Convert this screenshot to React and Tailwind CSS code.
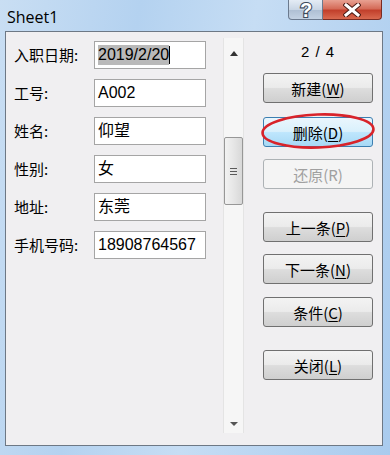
import React from 'react'

const cjk = "font-['Noto_Sans_CJK_SC','Liberation_Sans',sans-serif]"

const fields = [
  { label: '入职日期:', value: '2019/2/20', selected: true },
  { label: '工号:', value: 'A002' },
  { label: '姓名:', value: '仰望' },
  { label: '性别:', value: '女' },
  { label: '地址:', value: '东莞' },
  { label: '手机号码:', value: '18908764567' },
]

function Btn({ text, hot, kind = 'normal', className = '' }) {
  const styles = {
    normal: 'border-[#707070] bg-[linear-gradient(#f3f3f3_0%,#ebebeb_48%,#dddddd_52%,#cfcfcf_100%)] text-black',
    focus: 'border-[#3c7fb1] bg-[linear-gradient(#eaf6fd_0%,#d9f0fc_48%,#bee6fd_52%,#a7d9f5_100%)] text-black',
    disabled: 'border-[#adb2b5] bg-[#f4f4f4] text-[#a0a0a0]',
  }
  return (
    <div
      className={`relative h-[30px] w-[110px] rounded-[3px] border flex items-center justify-center text-[15px] leading-none ${cjk} ${styles[kind]} ${className}`}
    >
      <span>
        {text}(<span className={kind === 'disabled' ? '' : 'underline underline-offset-2'}>{hot}</span>)
      </span>
    </div>
  )
}

export default function App() {
  return (
    <div className="w-[390px] h-[455px] overflow-hidden bg-[linear-gradient(100deg,#c9def3_0%,#b4d2f0_30%,#c6ddf4_55%,#a9cbee_100%)] flex flex-col">
      {/* title bar */}
      <div className="h-[31px] flex items-start justify-between shrink-0">
        <span className="mt-[5px] ml-[7px] text-[16px] text-black font-['Open_Sans','Liberation_Sans',sans-serif]">
          Sheet1
        </span>
        <div className="flex mr-[8px]">
          <div className="w-[35px] h-[20px] border border-[#6b7a8e] border-t-0 rounded-bl-[4px] bg-[linear-gradient(#e4ecf5_0%,#c9d6e5_50%,#aebfd3_52%,#c3d2e3_100%)] flex items-center justify-center">
            <svg width="18" height="20" viewBox="0 0 18 20">
              <text
                x="9"
                y="17"
                textAnchor="middle"
                fontSize="20"
                fontWeight="bold"
                fontFamily="Liberation Sans, sans-serif"
                fill="#ffffff"
                stroke="#3c4a5c"
                strokeWidth="2.2"
                paintOrder="stroke"
              >
                ?
              </text>
            </svg>
          </div>
          <div className="w-[59px] h-[20px] border border-[#7a2b22] border-t-0 border-l-0 rounded-br-[4px] bg-[linear-gradient(#e8a192_0%,#d56c59_45%,#c2402c_55%,#d9694f_100%)] flex items-center justify-center">
            <svg width="18" height="14" viewBox="0 0 18 14">
              <path d="M3 2 L15 12 M15 2 L3 12" stroke="#4a1a14" strokeWidth="5" strokeLinecap="square" />
              <path d="M3 2 L15 12 M15 2 L3 12" stroke="#ffffff" strokeWidth="3" strokeLinecap="square" />
            </svg>
          </div>
        </div>
      </div>

      {/* client area */}
      <div className="ml-[5px] mr-[7px] h-[415px] border border-[#6d7885] bg-[#f0eff1] flex">
        {/* fields */}
        <div className="w-[217px] pt-[9px] pl-[8px] flex flex-col gap-[10px]">
          {fields.map((f) => (
            <div key={f.label} className="flex items-center h-[28px]">
              <span className={`w-[80px] text-[15px] text-black ${cjk}`}>{f.label}</span>
              <div className="w-[112px] h-[28px] border border-[#a5a5a5] bg-white flex items-center pl-[3px] text-[16px] text-black font-['Liberation_Sans','Noto_Sans_CJK_SC',sans-serif]">
                {f.selected ? (
                  <>
                    <span className="bg-[#b9b9b9] leading-[20px]">{f.value}</span>
                    <span className="w-px h-[18px] bg-black" />
                  </>
                ) : (
                  f.value
                )}
              </div>
            </div>
          ))}
        </div>

        {/* scrollbar */}
        <div className="mt-[6px] w-[21px] h-[395px] border-x border-[#e4e4e4] bg-[#f6f6f6] flex flex-col items-center">
          <div className="h-[30px] flex items-center justify-center">
            <div className="w-0 h-0 border-x-[4px] border-x-transparent border-b-[5px] border-b-[#333]" />
          </div>
          <div className="mt-[69px] w-[19px] h-[68px] rounded-[2px] border border-[#979797] bg-[linear-gradient(90deg,#f2f2f2,#e6e6e6_50%,#d8d8d8)] flex flex-col items-center justify-center gap-[2px]">
            <div className="w-[7px] h-px bg-[#5a5a5a]" />
            <div className="w-[7px] h-px bg-[#5a5a5a]" />
            <div className="w-[7px] h-px bg-[#5a5a5a]" />
          </div>
          <div className="flex-1" />
          <div className="h-[18px] flex items-center justify-center">
            <div className="w-0 h-0 border-x-[4px] border-x-transparent border-t-[4px] border-t-[#555]" />
          </div>
        </div>

        {/* buttons */}
        <div className="ml-[19px] w-[110px] flex flex-col">
          <div className="h-[41px] flex items-center justify-center text-[15px] text-black font-['Liberation_Sans',sans-serif] tracking-[1px]">
            2 / 4
          </div>
          <Btn text="新建" hot="W" />
          <div className="relative mt-[14px]">
            <Btn text="删除" hot="D" kind="focus" />
            <svg
              className="absolute left-[-3px] top-[-6px]"
              width="116"
              height="40"
              viewBox="0 0 116 40"
            >
              <ellipse
                cx="58"
                cy="20"
                rx="55.5"
                ry="16.5"
                fill="none"
                stroke="#d8232a"
                strokeWidth="2.6"
                transform="rotate(-2 58 20)"
              />
            </svg>
          </div>
          <Btn text="还原" hot="R" kind="disabled" className="mt-[12px]" />
          <Btn text="上一条" hot="P" className="mt-[23px]" />
          <Btn text="下一条" hot="N" className="mt-[12px]" />
          <Btn text="条件" hot="C" className="mt-[13px]" />
          <Btn text="关闭" hot="L" className="mt-[23px]" />
        </div>
      </div>
    </div>
  )
}
